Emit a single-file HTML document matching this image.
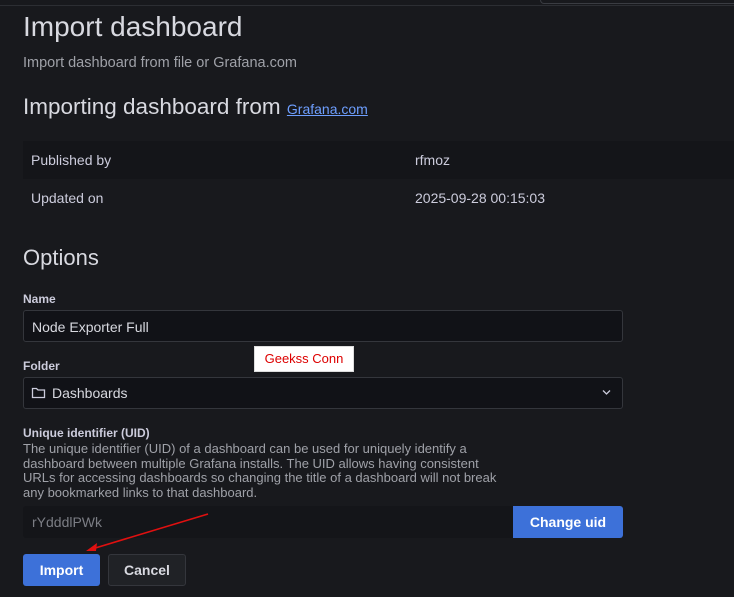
<!DOCTYPE html><html><head><style>
body{margin:0;width:734px;height:597px;background:#18191d;font-family:"Liberation Sans",sans-serif;color:#ccccdc;position:relative;overflow:hidden}
.a{position:absolute;white-space:nowrap}
.in{position:absolute;background:#111217;border:1px solid #34363c;border-radius:3px;box-sizing:border-box}
.lbl{font-size:12px;font-weight:bold;color:#ccccdc}
</style></head><body>
<div class="a" style="left:0;top:5px;width:734px;height:1px;background:#2c2e33"></div>
<div class="a" style="left:540px;top:0;width:194px;height:3px;border:1px solid #3a3c42;border-top:0;border-radius:0 0 0 4px"></div>
<div class="a" style="left:23px;top:11px;font-size:28px;color:#d8d9e0">Import dashboard</div>
<div class="a" style="left:23px;top:55px;font-size:14.5px;color:#9fa1a8">Import dashboard from file or Grafana.com</div>
<div class="a" style="left:23px;top:94px;font-size:22.5px;color:#d8d9e0">Importing dashboard from <span style="font-size:14px;color:#6e9fff;text-decoration:underline">Grafana.com</span></div>
<div class="a" style="left:23px;top:141px;width:711px;height:38px;background:#141519"></div>
<div class="a" style="left:31px;top:152px;font-size:14px">Published by</div>
<div class="a" style="left:415px;top:152px;font-size:14px">rfmoz</div>
<div class="a" style="left:31px;top:190px;font-size:14px">Updated on</div>
<div class="a" style="left:415px;top:190px;font-size:14px">2025-09-28 00:15:03</div>
<div class="a" style="left:23px;top:245px;font-size:22px;color:#d8d9e0">Options</div>
<div class="a lbl" style="left:23px;top:292px">Name</div>
<div class="in" style="left:23px;top:310px;width:600px;height:32px"></div>
<div class="a" style="left:32px;top:319px;font-size:14px;color:#d8d9e0">Node Exporter Full</div>
<div class="a lbl" style="left:23px;top:359px">Folder</div>
<div class="in" style="left:23px;top:377px;width:600px;height:32px"></div>
<svg class="a" style="left:31px;top:386px" width="15" height="13" viewBox="0 0 15 13"><path d="M1.5 2.5h4l1.5 1.5h6.5v7.5h-12z" fill="none" stroke="#ccccdc" stroke-width="1.3"/></svg>
<div class="a" style="left:52px;top:385px;font-size:14px;color:#d8d9e0">Dashboards</div>
<svg class="a" style="left:602px;top:389px" width="9" height="7"><path d="M1 1.5l3.5 3.5 3.5-3.5" fill="none" stroke="#ccccdc" stroke-width="1.3"/></svg>
<div class="a" style="left:254px;top:346px;width:100px;height:26px;background:#fff;border:1px solid #ddd;box-sizing:border-box;color:#d00;font-size:13px;text-align:center;line-height:24px">Geekss Conn</div>
<div class="a lbl" style="left:23px;top:426px">Unique identifier (UID)</div>
<div class="a" style="left:23px;top:442px;font-size:13px;line-height:14.7px;color:#9fa1a8">The unique identifier (UID) of a dashboard can be used for uniquely identify a<br>dashboard between multiple Grafana installs. The UID allows having consistent<br>URLs for accessing dashboards so changing the title of a dashboard will not break<br>any bookmarked links to that dashboard.</div>
<div class="a" style="left:23px;top:506px;width:490px;height:32px;background:#141519;border-radius:3px 0 0 3px"></div>
<div class="a" style="left:32px;top:514px;font-size:14px;color:#7b7d84">rYdddlPWk</div>
<div class="a" style="left:513px;top:506px;width:110px;height:32px;background:#3d71d9;border-radius:0 3px 3px 0;color:#fff;font-size:14px;font-weight:bold;text-align:center;line-height:32px">Change uid</div>
<div class="a" style="left:23px;top:554px;width:77px;height:32px;background:#3d71d9;border-radius:3px;color:#fff;font-size:14px;font-weight:bold;text-align:center;line-height:32px">Import</div>
<div class="a" style="left:108px;top:554px;width:78px;height:32px;background:#202226;border:1px solid #34363c;box-sizing:border-box;border-radius:3px;color:#d8d9e0;font-size:14px;font-weight:bold;text-align:center;line-height:30px">Cancel</div>
<svg class="a" style="left:0;top:0" width="734" height="597"><line x1="208" y1="514" x2="92" y2="549" stroke="#e01010" stroke-width="1.6"/><path d="M86 551l11-8-1 8z" fill="#e01010"/></svg>
</body></html>
